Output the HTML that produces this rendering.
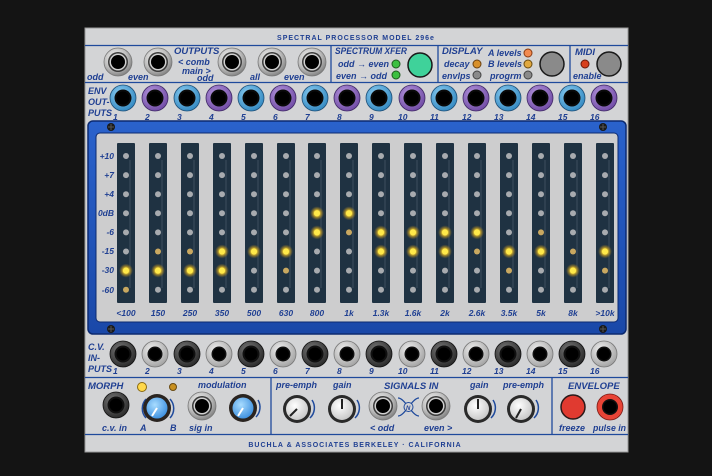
<!DOCTYPE html>
<html><head><meta charset="utf-8"><style>
html,body{margin:0;padding:0;background:#141414;width:712px;height:476px;overflow:hidden}
svg{display:block}
text{font-family:"Liberation Sans",sans-serif;font-style:italic;font-weight:bold;fill:#1f3f92}
.s{font-size:9px}
.h{font-size:9.5px}
.n{font-size:8.5px}
.u{font-style:normal;font-size:7px;letter-spacing:1px}
</style></head><body>
<svg width="712" height="476" viewBox="0 0 712 476" xmlns="http://www.w3.org/2000/svg">
<defs>
<radialGradient id="silver" cx="40%" cy="35%" r="70%"><stop offset="0" stop-color="#f4f4f4"/><stop offset="0.6" stop-color="#bdbdbd"/><stop offset="1" stop-color="#7a7a7a"/></radialGradient>
<radialGradient id="blu" cx="40%" cy="35%" r="70%"><stop offset="0" stop-color="#8fd0f4"/><stop offset="1" stop-color="#2f86bf"/></radialGradient>
<radialGradient id="pur" cx="40%" cy="35%" r="70%"><stop offset="0" stop-color="#b89ae0"/><stop offset="1" stop-color="#6d47a2"/></radialGradient>
<radialGradient id="dk" cx="40%" cy="35%" r="70%"><stop offset="0" stop-color="#7a7a7a"/><stop offset="1" stop-color="#262626"/></radialGradient>
<radialGradient id="lt" cx="40%" cy="35%" r="70%"><stop offset="0" stop-color="#f2f2f2"/><stop offset="1" stop-color="#a0a0a0"/></radialGradient>
<radialGradient id="kb" cx="40%" cy="35%" r="70%"><stop offset="0" stop-color="#a8dcff"/><stop offset="1" stop-color="#3b8ede"/></radialGradient>
<radialGradient id="kw" cx="40%" cy="35%" r="70%"><stop offset="0" stop-color="#ffffff"/><stop offset="1" stop-color="#c6c6c6"/></radialGradient>
<linearGradient id="fr" x1="0" y1="0" x2="0" y2="1"><stop offset="0" stop-color="#2a62cc"/><stop offset="1" stop-color="#1a48a8"/></linearGradient>
<radialGradient id="glow"><stop offset="0" stop-color="#fff9b0"/><stop offset="0.35" stop-color="#ffe23a"/><stop offset="0.6" stop-color="#e0b020" stop-opacity="0.6"/><stop offset="1" stop-color="#c09020" stop-opacity="0"/></radialGradient>
<g id="jb"><circle r="13" fill="url(#blu)" stroke="#1d4f78" stroke-width="0.8"/><circle r="8.5" fill="#0a0a0a"/><circle r="6.5" fill="#000"/></g>
<g id="jp"><circle r="13" fill="url(#pur)" stroke="#3f2866" stroke-width="0.8"/><circle r="8.5" fill="#0a0a0a"/><circle r="6.5" fill="#000"/></g>
<g id="jd"><circle r="13" fill="url(#dk)" stroke="#111" stroke-width="0.8"/><circle r="8.5" fill="#111"/><circle r="6.5" fill="#000"/></g>
<g id="jl"><circle r="13" fill="url(#lt)" stroke="#777" stroke-width="0.8"/><circle r="7.5" fill="#111"/><circle r="6" fill="#000"/></g>
<g id="js"><circle r="14" fill="url(#silver)" stroke="#777" stroke-width="0.8"/><circle r="10" fill="#3a3a3a"/><circle r="8.5" fill="#d0d0d0"/><circle r="7" fill="#000"/></g>
<g id="scr"><circle r="4" fill="#1a1a1a"/><path d="M-3 0H3M0 -3V3" stroke="#555" stroke-width="1"/></g>
</defs>

<rect x="85" y="28" width="543" height="424" fill="#d3d4d6"/>
<rect x="85" y="28" width="543" height="424" fill="none" stroke="#9a9a9a" stroke-width="1"/>
<g stroke="#1f4a9c" stroke-width="1.3">
<line x1="85" y1="45.5" x2="628" y2="45.5"/>
<line x1="85" y1="82.5" x2="628" y2="82.5"/>
<line x1="85" y1="377.5" x2="628" y2="377.5"/>
<line x1="85" y1="434.5" x2="628" y2="434.5"/>
<line x1="331" y1="45" x2="331" y2="82"/>
<line x1="438" y1="45" x2="438" y2="82"/>
<line x1="570" y1="45" x2="570" y2="82"/>
<line x1="271" y1="377" x2="271" y2="434"/>
<line x1="552" y1="377" x2="552" y2="434"/>
</g>
<text x="356" y="40" class="u" text-anchor="middle">SPECTRAL PROCESSOR MODEL  296e</text>
<text x="355" y="447" class="u" text-anchor="middle">BUCHLA &amp; ASSOCIATES    BERKELEY · CALIFORNIA</text>

<use href="#js" x="118" y="62"/><use href="#js" x="158" y="62"/><use href="#js" x="232" y="62"/><use href="#js" x="272" y="62"/><use href="#js" x="312" y="62"/>
<text x="87" y="80" class="s">odd</text><text x="128" y="80" class="s">even</text>
<text x="174" y="54" class="h">OUTPUTS</text>
<text x="178" y="65" class="s">&lt; comb</text>
<text x="182" y="74" class="s">main &gt;</text>
<text x="197" y="81" class="s">odd</text>
<text x="250" y="80" class="s">all</text><text x="284" y="80" class="s">even</text>

<text x="335" y="54" class="h" textLength="72" lengthAdjust="spacingAndGlyphs">SPECTRUM XFER</text>
<text x="338" y="67" class="s">odd → even</text>
<text x="336" y="79" class="s">even → odd</text>
<circle cx="396" cy="64" r="4" fill="#3cc040" stroke="#1e5a1e" stroke-width="1"/>
<circle cx="396" cy="75" r="4" fill="#3cc040" stroke="#1e5a1e" stroke-width="1"/>
<circle cx="420" cy="65" r="12" fill="#3fd29a" stroke="#1a1a1a" stroke-width="1.5"/>

<text x="442" y="54" class="h">DISPLAY</text>
<text x="444" y="67" class="s">decay</text>
<text x="442" y="79" class="s">envlps</text>
<text x="488" y="56" class="s">A levels</text>
<text x="488" y="67" class="s">B levels</text>
<text x="490" y="79" class="s">progrm</text>
<circle cx="477" cy="64" r="4" fill="#d8902a" stroke="#6a4010" stroke-width="1"/>
<circle cx="477" cy="75" r="4" fill="#8a8a8a" stroke="#444" stroke-width="1"/>
<circle cx="528" cy="53" r="4" fill="#f28a50" stroke="#8a3a10" stroke-width="1"/>
<circle cx="528" cy="64" r="4" fill="#e0a840" stroke="#6a4a10" stroke-width="1"/>
<circle cx="528" cy="75" r="4" fill="#8a8a8a" stroke="#444" stroke-width="1"/>
<circle cx="552" cy="64" r="12" fill="#8a8a8a" stroke="#1a1a1a" stroke-width="1.5"/>
<text x="575" y="55" class="h">MIDI</text>
<circle cx="585" cy="64" r="4" fill="#d8401c" stroke="#6a1a0a" stroke-width="1"/>
<text x="573" y="79" class="s">enable</text>
<circle cx="609" cy="64" r="12" fill="#8a8a8a" stroke="#1a1a1a" stroke-width="1.5"/>

<text x="88" y="94" class="s">ENV</text><text x="88" y="105" class="s">OUT-</text><text x="88" y="116" class="s">PUTS</text>
<use href="#jb" x="123" y="98"/><use href="#jp" x="155" y="98"/><use href="#jb" x="187" y="98"/><use href="#jp" x="219" y="98"/>
<use href="#jb" x="251" y="98"/><use href="#jp" x="283" y="98"/><use href="#jb" x="315" y="98"/><use href="#jp" x="347" y="98"/>
<use href="#jb" x="379" y="98"/><use href="#jp" x="412" y="98"/><use href="#jb" x="444" y="98"/><use href="#jp" x="476" y="98"/>
<use href="#jb" x="508" y="98"/><use href="#jp" x="540" y="98"/><use href="#jb" x="572" y="98"/><use href="#jp" x="604" y="98"/>
<text x="113" y="120" class="n">1</text><text x="145" y="120" class="n">2</text><text x="177" y="120" class="n">3</text><text x="209" y="120" class="n">4</text>
<text x="241" y="120" class="n">5</text><text x="273" y="120" class="n">6</text><text x="305" y="120" class="n">7</text><text x="337" y="120" class="n">8</text>
<text x="369" y="120" class="n">9</text><text x="398" y="120" class="n">10</text><text x="430" y="120" class="n">11</text><text x="462" y="120" class="n">12</text>
<text x="494" y="120" class="n">13</text><text x="526" y="120" class="n">14</text><text x="558" y="120" class="n">15</text><text x="590" y="120" class="n">16</text>

<rect x="88" y="121" width="538" height="213" rx="5" fill="url(#fr)" stroke="#0c2a70" stroke-width="1.5"/>
<rect x="96" y="133" width="522" height="189" rx="4" fill="#cdcdce" stroke="#0c2a70" stroke-width="1"/>
<use href="#scr" x="111" y="127"/><use href="#scr" x="111" y="329"/><use href="#scr" x="603" y="127"/><use href="#scr" x="603" y="329"/>
<g text-anchor="end">
<text x="114" y="159" class="n">+10</text><text x="114" y="178" class="n">+7</text><text x="114" y="197" class="n">+4</text><text x="114" y="216" class="n">0dB</text>
<text x="114" y="235" class="n">-6</text><text x="114" y="254" class="n">-15</text><text x="114" y="273" class="n">-30</text><text x="114" y="293" class="n">-60</text>
</g>
<g fill="#1f3242">
<rect x="117" y="143" width="18" height="160" rx="1"/><rect x="149" y="143" width="18" height="160" rx="1"/><rect x="181" y="143" width="18" height="160" rx="1"/><rect x="213" y="143" width="18" height="160" rx="1"/>
<rect x="245" y="143" width="18" height="160" rx="1"/><rect x="277" y="143" width="18" height="160" rx="1"/><rect x="308" y="143" width="18" height="160" rx="1"/><rect x="340" y="143" width="18" height="160" rx="1"/>
<rect x="372" y="143" width="18" height="160" rx="1"/><rect x="404" y="143" width="18" height="160" rx="1"/><rect x="436" y="143" width="18" height="160" rx="1"/><rect x="468" y="143" width="18" height="160" rx="1"/>
<rect x="500" y="143" width="18" height="160" rx="1"/><rect x="532" y="143" width="18" height="160" rx="1"/><rect x="564" y="143" width="18" height="160" rx="1"/><rect x="596" y="143" width="18" height="160" rx="1"/>
</g>
<g id="dots" fill="#9c9fa3"></g>
<g text-anchor="middle">
<text x="126" y="316" class="n">&lt;100</text><text x="158" y="316" class="n">150</text><text x="190" y="316" class="n">250</text><text x="222" y="316" class="n">350</text>
<text x="254" y="316" class="n">500</text><text x="286" y="316" class="n">630</text><text x="317" y="316" class="n">800</text><text x="349" y="316" class="n">1k</text>
<text x="381" y="316" class="n">1.3k</text><text x="413" y="316" class="n">1.6k</text><text x="445" y="316" class="n">2k</text><text x="477" y="316" class="n">2.6k</text>
<text x="509" y="316" class="n">3.5k</text><text x="541" y="316" class="n">5k</text><text x="573" y="316" class="n">8k</text><text x="605" y="316" class="n">&gt;10k</text>
</g>

<text x="88" y="350" class="s">C.V.</text><text x="88" y="361" class="s">IN-</text><text x="88" y="372" class="s">PUTS</text>
<use href="#jd" x="123" y="354"/><use href="#jl" x="155" y="354"/><use href="#jd" x="187" y="354"/><use href="#jl" x="219" y="354"/>
<use href="#jd" x="251" y="354"/><use href="#jl" x="283" y="354"/><use href="#jd" x="315" y="354"/><use href="#jl" x="347" y="354"/>
<use href="#jd" x="379" y="354"/><use href="#jl" x="412" y="354"/><use href="#jd" x="444" y="354"/><use href="#jl" x="476" y="354"/>
<use href="#jd" x="508" y="354"/><use href="#jl" x="540" y="354"/><use href="#jd" x="572" y="354"/><use href="#jl" x="604" y="354"/>
<text x="113" y="374" class="n">1</text><text x="145" y="374" class="n">2</text><text x="177" y="374" class="n">3</text><text x="209" y="374" class="n">4</text>
<text x="241" y="374" class="n">5</text><text x="273" y="374" class="n">6</text><text x="305" y="374" class="n">7</text><text x="337" y="374" class="n">8</text>
<text x="369" y="374" class="n">9</text><text x="398" y="374" class="n">10</text><text x="430" y="374" class="n">11</text><text x="462" y="374" class="n">12</text>
<text x="494" y="374" class="n">13</text><text x="526" y="374" class="n">14</text><text x="558" y="374" class="n">15</text><text x="590" y="374" class="n">16</text>

<text x="88" y="389" class="h">MORPH</text>
<use href="#jd" x="116" y="405"/>
<text x="102" y="431" class="s">c.v. in</text>
<circle cx="142" cy="387" r="4.5" fill="#ffd84a" stroke="#8a6a10" stroke-width="1"/>
<circle cx="173" cy="387" r="3.5" fill="#c89020" stroke="#6a4a10" stroke-width="1"/>
<path d="M146 399 A 14 14 0 0 0 146 418" fill="none" stroke="#1f4a9c" stroke-width="1.5"/>
<path d="M170 399 A 14 14 0 0 1 170 418" fill="none" stroke="#1f4a9c" stroke-width="1.5"/>
<circle cx="157" cy="408" r="14" fill="#2a2420"/><circle cx="157" cy="408" r="10.5" fill="url(#kb)"/>
<line x1="157" y1="408" x2="152" y2="416" stroke="#fff" stroke-width="2"/>
<text x="140" y="431" class="s">A</text><text x="170" y="431" class="s">B</text>
<text x="198" y="388" class="s">modulation</text>
<use href="#js" x="202" y="406"/>
<text x="189" y="431" class="s">sig in</text>
<circle cx="243" cy="408" r="14" fill="#2a2420"/><circle cx="243" cy="408" r="10.5" fill="url(#kb)"/>
<line x1="243" y1="408" x2="238" y2="416" stroke="#fff" stroke-width="2"/>
<path d="M258 400 A 14 14 0 0 1 256 417" fill="none" stroke="#1f4a9c" stroke-width="1.5"/>

<text x="276" y="388" class="s">pre-emph</text>
<circle cx="297" cy="409" r="14" fill="#2a2a2a"/><circle cx="297" cy="409" r="11" fill="url(#kw)"/>
<line x1="297" y1="409" x2="290" y2="416" stroke="#222" stroke-width="2"/>
<path d="M312 400 A 14 14 0 0 1 310 418" fill="none" stroke="#1f4a9c" stroke-width="1.5"/>
<text x="333" y="388" class="s">gain</text>
<circle cx="342" cy="409" r="14" fill="#2a2a2a"/><circle cx="342" cy="409" r="11" fill="url(#kw)"/>
<line x1="342" y1="409" x2="342" y2="399" stroke="#222" stroke-width="2"/>
<path d="M357 400 A 14 14 0 0 1 355 418" fill="none" stroke="#1f4a9c" stroke-width="1.5"/>

<text x="384" y="389" class="h">SIGNALS IN</text>
<use href="#js" x="383" y="406"/><use href="#js" x="436" y="406"/>
<path d="M398 398 C405 398 412 416 419 416 M398 416 C405 416 412 398 419 398" fill="none" stroke="#1f4a9c" stroke-width="1.3"/>
<circle cx="408.5" cy="407" r="4.5" fill="#d3d4d6" stroke="#1f4a9c" stroke-width="1"/>
<text x="406" y="410" style="font-size:6px">N</text>
<text x="370" y="431" class="s">&lt; odd</text><text x="424" y="431" class="s">even &gt;</text>
<text x="470" y="388" class="s">gain</text>
<circle cx="478" cy="409" r="14" fill="#2a2a2a"/><circle cx="478" cy="409" r="11" fill="url(#kw)"/>
<line x1="478" y1="409" x2="478" y2="399" stroke="#222" stroke-width="2"/>
<path d="M493 400 A 14 14 0 0 1 491 418" fill="none" stroke="#1f4a9c" stroke-width="1.5"/>
<text x="503" y="388" class="s">pre-emph</text>
<circle cx="521" cy="409" r="14" fill="#2a2a2a"/><circle cx="521" cy="409" r="11" fill="url(#kw)"/>
<line x1="521" y1="409" x2="516" y2="418" stroke="#222" stroke-width="2"/>
<path d="M536 400 A 14 14 0 0 1 534 418" fill="none" stroke="#1f4a9c" stroke-width="1.5"/>

<text x="568" y="389" class="h">ENVELOPE</text>
<circle cx="573" cy="407" r="12" fill="#e03a30" stroke="#2a1a1a" stroke-width="1.5"/>
<circle cx="610" cy="407" r="13" fill="#e84436" stroke="#7a1a14" stroke-width="0.8"/><circle cx="610" cy="407" r="8" fill="#111"/><circle cx="610" cy="407" r="6.5" fill="#000"/>
<text x="559" y="431" class="s">freeze</text><text x="593" y="431" class="s" textLength="33" lengthAdjust="spacingAndGlyphs">pulse in</text>
</svg>
<script>
(function(){
var g=document.getElementById('dots'),ns='http://www.w3.org/2000/svg';
var xs=[126,158,190,222,254,286,317,349,381,413,445,477,509,541,573,605];
var lit={0:{6:2,7:1},1:{6:2,5:1},2:{6:2,5:1},3:{5:2,6:2},4:{5:2},5:{5:2,6:1},6:{3:2,4:2},7:{3:2,4:1},8:{4:2,5:2},9:{4:2,5:2},10:{4:2,5:2},11:{4:2,5:1},12:{5:2,6:1},13:{5:2,4:1},14:{6:2,5:1},15:{5:2,6:1}};
for(var i=0;i<16;i++){
 var l=document.createElementNS(ns,'line');l.setAttribute('x1',xs[i]+4);l.setAttribute('x2',xs[i]+4);l.setAttribute('y1',160);l.setAttribute('y2',288);l.setAttribute('stroke','#5a6a78');l.setAttribute('stroke-width','0.5');g.appendChild(l);
 for(var r=0;r<8;r++){
  var y=156+r*19.1,s=(lit[i]||{})[r]||0,c;
  if(s==2){c=document.createElementNS(ns,'circle');c.setAttribute('cx',xs[i]);c.setAttribute('cy',y);c.setAttribute('r',7);c.setAttribute('fill','url(#glow)');g.appendChild(c);}
  c=document.createElementNS(ns,'circle');c.setAttribute('cx',xs[i]);c.setAttribute('cy',y);c.setAttribute('r',3);
  c.setAttribute('fill',s==2?'#ffe94a':(s==1?'#c9a860':'#a8abaf'));g.appendChild(c);
 }
}
})();
</script>
</body></html>
